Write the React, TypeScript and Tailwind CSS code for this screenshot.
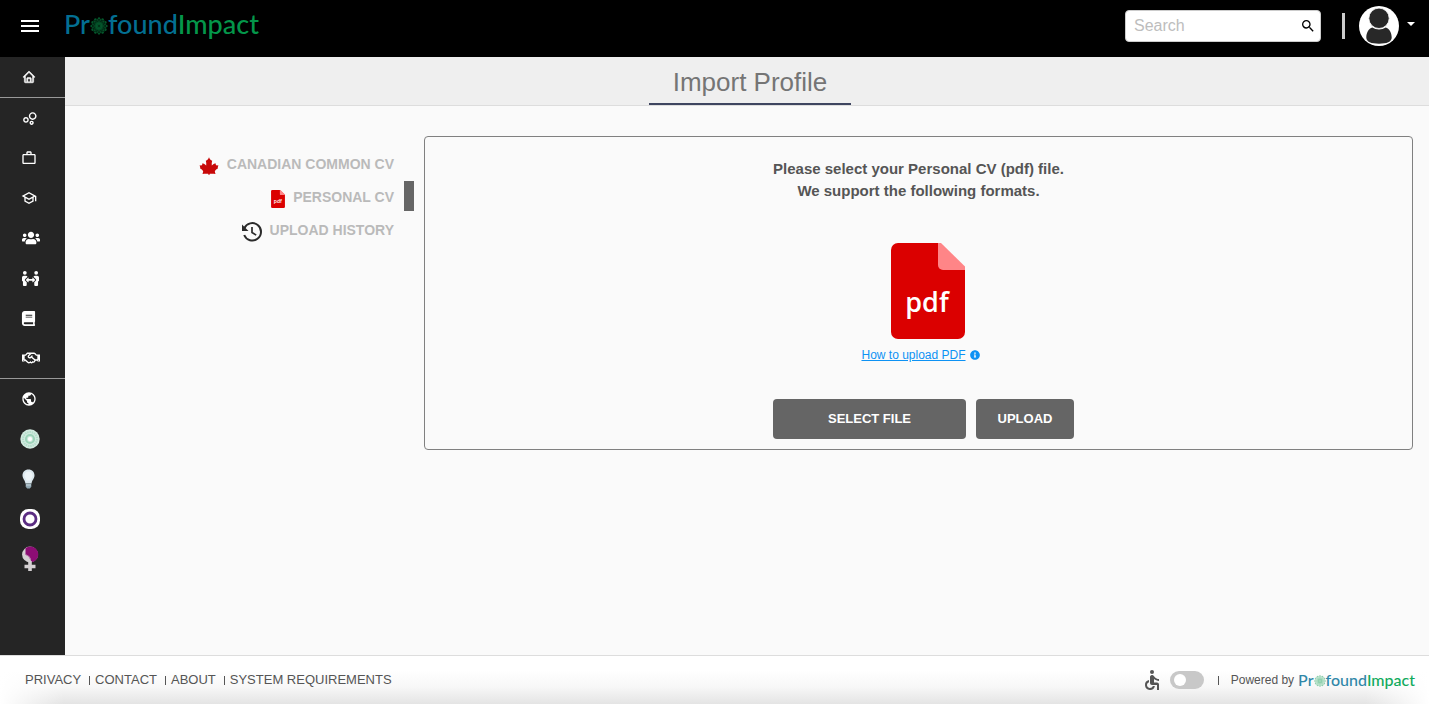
import React from "react";
import { MdOutlineBubbleChart, MdWorkOutline, MdOutlineSchool, MdPublic, MdSearch, MdAccessible, MdMenu } from "react-icons/md";
import { FaUsers, FaPeopleArrows, FaBook, FaRegHandshake, FaInfoCircle } from "react-icons/fa";
import { BiHome } from "react-icons/bi";

const PETALS = Array.from({ length: 12 }, (_, i) => i * 30);

function Flower({ className }: { className: string }) {
  return (
    <svg viewBox="0 0 32 32" className={className} fill="none" stroke="currentColor" aria-hidden="true">
      <circle cx="16" cy="16" r="12" fill="currentColor" fillOpacity="0.35" stroke="none" />
      {PETALS.map((a) => (
        <g key={a} transform={`rotate(${a} 16 16)`}>
          <ellipse cx="16" cy="8" rx="3.6" ry="6" strokeWidth="1.2" />
          <circle cx="16" cy="2.500" r="2" fill="currentColor" stroke="none" />
        </g>
      ))}
      <circle cx="16" cy="16" r="5" strokeWidth="3" />
    </svg>
  );
}

function HeaderLogo() {
  return (
    <a href="#home" aria-label="ProfoundImpact" className="flex items-center pb-1 font-[Lato,sans-serif] text-[27px] leading-8 font-medium text-[#036f92]">
      Pr
      <Flower className="mt-1 h-[18px] w-[18px] text-[#04542a]" />
      found<span className="text-[#04964a]">Impact</span>
    </a>
  );
}

function FooterLogo() {
  return (
    <a href="#home" aria-label="ProfoundImpact" className="flex items-center font-[Lato,sans-serif] text-base leading-5 font-medium text-[#2f87a8]">
      Pr
      <Flower className="mt-0.5 h-3 w-3 text-[#8fd0ac]" />
      found<span className="text-[#10aa5c]">Impact</span>
    </a>
  );
}

function Avatar() {
  return (
    <svg viewBox="0 0 40 40" className="h-10 w-10" aria-hidden="true">
      <circle cx="20" cy="20" r="20" fill="#fff" />
      <path d="M7.300 31.500c0-5 2.500-9 6-10 4 2.600 9.400 2.600 13.400 0 3.500 1 6 5 6 10 0 4.500-5 6.200-12.700 6.200S7.300 36 7.300 31.500z" fill="#282828" />
      <circle cx="20" cy="12.300" r="10.200" fill="#282828" stroke="#fff" strokeWidth="0.8" />
    </svg>
  );
}

function MandalaIcon() {
  return (
    <svg viewBox="0 0 20 20" className="h-5 w-5" aria-hidden="true">
      <circle cx="10" cy="10" r="9.700" fill="#d3ebe0" />
      <circle cx="10" cy="10" r="7" fill="none" stroke="#b3decb" strokeWidth="2" strokeDasharray="1.500 0.800" />
      <circle cx="10" cy="10" r="4" fill="none" stroke="#9dd5ba" strokeWidth="2.200" />
      <circle cx="10" cy="10" r="2" fill="#fff" />
    </svg>
  );
}

function BulbIcon() {
  return (
    <svg viewBox="0 0 20 20" className="h-5 w-5" aria-hidden="true">
      <path d="M8.500 0.500c3.700 0 6 2.600 6 6 0 3.200-2.600 4.600-2.900 8H5.400c-.3-3.400-2.900-4.800-2.900-8 0-3.400 2.300-6 6-6z" fill="#dce8ee" />
      <path d="M8.500 2.500c2.400 0 4 1.700 4 4 0 2-1.500 3-2 5h-4c-.5-2-2-3-2-5 0-2.300 1.600-4 4-4z" fill="#edf4f7" />
      <path d="M5.700 14.500h5.600v3.200L9.800 19.500H7.200l-1.500-1.800z" fill="#90a7b2" />
      <path d="M6 16h5" stroke="#d4e0e6" strokeWidth="0.800" />
    </svg>
  );
}

function RingIcon() {
  return (
    <svg viewBox="0 0 20 20" className="h-5 w-5" aria-hidden="true">
      <rect width="20" height="20" rx="8.500" fill="#fff" />
      <circle cx="10" cy="10" r="6" fill="none" stroke="#5b2d82" strokeWidth="2.800" />
    </svg>
  );
}

function VenusIcon() {
  return (
    <svg viewBox="0 0 20 26" className="h-[26px] w-5" aria-hidden="true">
      <circle cx="10" cy="8.500" r="7.900" fill="#d4d0d2" />
      <path d="M5.500 2.200A7.900 7.900 0 1 1 11 16.300C11 11.500 9.500 9.500 5.500 8.500z" fill="#8c0d74" />
      <path d="M5.500 8.500c2.500 1 4 2.500 5 5" fill="none" stroke="#b56aa6" strokeWidth="1" />
      <path d="M10 15v10M4.500 20.500h11" stroke="#d4d0d2" strokeWidth="3.600" />
    </svg>
  );
}

function PdfIcon({ className }: { className: string }) {
  return (
    <svg viewBox="0 0 74 96" className={className} aria-hidden="true">
      <path d="M7 0H47L74 25V89a7 7 0 0 1-7 7H7a7 7 0 0 1-7-7V7a7 7 0 0 1 7-7z" fill="#db0000" />
      <path d="M47 0h3l24 23.500V27H52a5 5 0 0 1-5-5z" fill="#ff8587" />
      <text x="36" y="68.500" textAnchor="middle" fill="#fff" fontSize="27" fontWeight="600" fontFamily="Open Sans, sans-serif">
        pdf
      </text>
    </svg>
  );
}

function LeafIcon() {
  return (
    <svg viewBox="0 0 20 20" className="h-5 w-5" aria-hidden="true">
      <path
        d="M10 1.200c.6 1.900 1.700 2.900 3.200 3.600-.5 1.600-.6 3-.4 4.600 1.200-1.200 2.400-1.900 3.700-2.100l.5 1.900 2.500.2c-.7 1.200-.8 2-.6 3.100-1.500.7-2.600 1.600-3.100 3l.7 2.500c-2-.4-3.700-.4-5.700-.2l-.2.900h-1.200l-.2-.9c-2-.2-3.700-.2-5.700.2l.7-2.500c-.5-1.400-1.600-2.300-3.100-3 .2-1.100.1-1.900-.6-3.100l2.500-.2.500-1.900c1.300.2 2.500.9 3.700 2.100.2-1.600.1-3-.4-4.600 1.500-.7 2.600-1.700 3.200-3.600z"
        fill="#c80808"
      />
    </svg>
  );
}

function HistoryIcon() {
  return (
    <svg viewBox="0 0 20 20" className="h-5 w-5" fill="none" stroke="#2b2b2b" aria-hidden="true">
      <path d="M2.300 6.400A8.700 8.700 0 1 1 2.200 13" strokeWidth="2" />
      <path d="M0 2.500V9h6.500z" fill="#2b2b2b" stroke="none" />
      <path d="M10 5v5.500l4.200 2.600" strokeWidth="1.700" />
    </svg>
  );
}

const topLinks = [
  { label: "Network", icon: <MdOutlineBubbleChart size={17} /> },
  { label: "Work", icon: <MdWorkOutline size={16} /> },
  { label: "Education", icon: <MdOutlineSchool size={16} /> },
  { label: "Groups", icon: <FaUsers size={18} className="ml-px" /> },
  { label: "Mentoring", icon: <FaPeopleArrows size={17} className="ml-px" /> },
  { label: "Publications", icon: <FaBook size={15} /> },
  { label: "Partners", icon: <FaRegHandshake size={18} className="ml-px" /> },
];

const bottomLinks = [
  { label: "World", icon: <MdPublic size={16} />, pad: "pl-[21px]" },
  { label: "Impact", icon: <MandalaIcon />, pad: "pl-5" },
  { label: "Ideas", icon: <BulbIcon />, pad: "pl-5" },
  { label: "Community", icon: <RingIcon />, pad: "pl-5" },
  { label: "Women", icon: <VenusIcon />, pad: "pl-5" },
];

const sources = [
  { label: "CANADIAN COMMON CV", icon: <LeafIcon />, active: false },
  { label: "PERSONAL CV", icon: <PdfIcon className="h-[18px] w-3.5" />, active: true },
  { label: "UPLOAD HISTORY", icon: <HistoryIcon />, active: false },
];

const footerLinks = ["PRIVACY", "CONTACT", "ABOUT", "SYSTEM REQUIREMENTS"];

export default function App() {
  return (
    <div className="flex min-h-screen flex-col bg-[#fafafa] font-['Liberation_Sans',Arial,sans-serif]">
      <header className="flex h-[57px] items-center bg-black pr-3.5 pb-[5px] pl-[18px]">
        <button aria-label="Menu" className="mr-[22px] text-white">
          <MdMenu size={24} />
        </button>
        <HeaderLogo />
        <div className="ml-auto flex items-center">
          <div className="flex h-8 w-[196px] items-center rounded border border-[#ccc] bg-white pr-1 pl-2">
            <input aria-label="Search" placeholder="Search" className="min-w-0 flex-1 text-base outline-none placeholder:text-[#bdbdbd]" />
            <button aria-label="Submit search">
              <MdSearch size={16} />
            </button>
          </div>
          <span className="mr-3.5 ml-[21px] h-[26px] w-[3px] bg-[#ccc]" />
          <button aria-label="Account" className="flex items-center gap-2">
            <Avatar />
            <svg viewBox="0 0 8 4" className="mb-1 h-1 w-2" aria-hidden="true">
              <path d="M0 0h8L4 4z" fill="#fff" />
            </svg>
          </button>
        </div>
      </header>

      <div className="flex flex-1">
        <nav aria-label="Main" className="w-[65px] shrink-0 bg-[#252525] text-white">
          <a href="#home" aria-label="Home" className="flex h-10 items-center pl-[22px]">
            <BiHome size={14} stroke="currentColor" strokeWidth="0.8" />
          </a>
          <div className="border-y border-[#999]">
            {topLinks.map((l) => (
              <a key={l.label} href="#section" aria-label={l.label} className="flex h-10 items-center pl-[21px]">
                {l.icon}
              </a>
            ))}
          </div>
          {bottomLinks.map((l) => (
            <a key={l.label} href="#section" aria-label={l.label} className={`flex h-10 items-center ${l.pad}`}>
              {l.icon}
            </a>
          ))}
        </nav>

        <main className="min-w-0 flex-1">
          <div className="flex h-[49px] justify-center border-b border-[#ddd] bg-[#efefef] pl-1.5">
            <h1 className="h-12 border-b-2 border-[#3e4560] px-6 pt-[7px] text-[26px] leading-9 text-[#757575]">Import Profile</h1>
          </div>

          <div className="flex items-start pt-[30px] pr-4">
            <aside className="flex w-[349px] shrink-0 flex-col gap-[3px] pt-3">
              {sources.map((s) => (
                <button key={s.label} className="flex h-[30px] items-center justify-end">
                  <span className="pt-1.5">{s.icon}</span>
                  <span className="mr-2.5 pt-0.5 pl-2 text-sm font-bold text-[#bababa]">{s.label}</span>
                  <span className={s.active ? "h-full w-2.5 bg-[#666]" : "h-full w-2.5"} />
                </button>
              ))}
            </aside>

            <section className="ml-2.5 flex flex-1 flex-col items-center rounded border border-[#808080] pt-[21px] pb-2.5">
              <p className="text-center text-[15px] leading-[22px] font-bold text-[#555]">
                Please select your Personal CV (pdf) file.
                <br />
                We support the following formats.
              </p>
              <div className="mt-[41px] pl-[18px]">
                <PdfIcon className="h-24 w-[74px]" />
              </div>
              <a href="#help" className="mt-1.5 flex items-center gap-1 pl-1 text-xs leading-5 text-[#0d92f4]">
                <span className="underline">How to upload PDF</span>
                <FaInfoCircle size={10} />
              </a>
              <div className="mt-[34px] flex gap-2.5 pl-2.5 text-[13px] font-bold text-white">
                <button className="h-10 w-[193px] rounded bg-[#656565]">SELECT FILE</button>
                <button className="h-10 w-[98px] rounded bg-[#656565]">UPLOAD</button>
              </div>
            </section>
          </div>
        </main>
      </div>

      <footer className="flex h-[49px] items-center border-t border-[#ddd] bg-white bg-[linear-gradient(to_right,#fff,transparent_64px,transparent_calc(100%-64px),#fff),linear-gradient(to_bottom,#fff_30%,#f7f7f7_65%,#e4e4e4)] pr-3.5 pl-[25px] text-[13px] text-[#555]">
        <ul className="flex items-center">
          {footerLinks.map((l, i) => (
            <li key={l} className="flex items-center">
              {i > 0 && <span className="mr-[5px] ml-2 h-[9px] w-px bg-[#555]" />}
              <a href="#page">{l}</a>
            </li>
          ))}
        </ul>
        <div className="ml-auto flex items-center">
          <MdAccessible size={24} />
          <label className="relative ml-1.5 flex h-[18px] w-[34px] items-center rounded-full bg-[#c8c8c8] px-1">
            <input type="checkbox" aria-label="Accessibility mode" className="absolute inset-0 opacity-0" />
            <span className="h-3 w-3 rounded-full bg-white" />
          </label>
          <span className="mr-3 ml-3.5 h-[9px] w-px bg-[#555]" />
          <span className="mr-1 text-xs">Powered by</span>
          <FooterLogo />
        </div>
      </footer>
    </div>
  );
}
